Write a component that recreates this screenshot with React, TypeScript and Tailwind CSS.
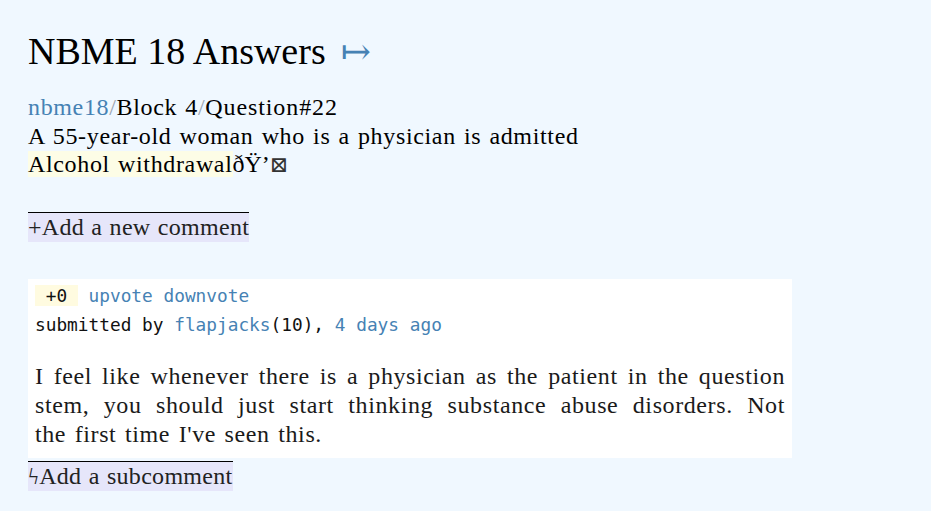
import React from "react";

const serif = { fontFamily: '"Liberation Serif", "DejaVu Serif", serif' };
const mono = { fontFamily: '"DejaVu Sans Mono", "Liberation Mono", monospace' };

export default function App() {
  return (
    <div
      className="min-h-screen bg-[#f0f8ff] pl-[28px] pt-[29px] pb-[20px] text-black"
      style={serif}
    >
      <h1 className="text-[38px] leading-[44px] font-normal">
        NBME 18 Answers<span className="ml-[15px] text-[#4682b4] text-[36px]">↦</span>
      </h1>

      <div className="mt-[19px] text-[24px] leading-[28.5px] tracking-[0.65px] [word-spacing:1.5px]">
        <div>
          <span className="text-[#4682b4]">nbme18</span>
          <span className="text-[#9aa5b1]">/</span>
          <span>Block 4</span>
          <span className="text-[#9aa5b1]">/</span>
          <span className="tracking-[0.9px]">Question#22</span>
        </div>
        <div>A 55-year-old woman who is a physician is admitted</div>
        <div>
          <span className="bg-[#fdfde6]">Alcohol withdrawal</span>
          <span className="tracking-normal">ðŸ’</span>
          <span className="text-[22px] text-[#333]">⊠</span>
        </div>
      </div>

      <div className="mt-[32px]">
        <span className="inline-block border-t border-black bg-[#e6e6fa] text-[24px] leading-[29px] text-[#222] tracking-[0.3px] [word-spacing:1px]">
          +Add a new comment
        </span>
      </div>

      <div className="mt-[37px] w-[764px] bg-white px-[7px] pt-[2.5px] pb-[9px]">
        <div className="text-[17.8px] leading-[29px] whitespace-pre" style={mono}>
          <span className="bg-[#fffbe0] text-[#111]"> +0 </span>
          <span className="text-[#4682b4]"> upvote downvote</span>
        </div>
        <div className="text-[17.8px] leading-[29px] whitespace-pre text-[#111]" style={mono}>
          submitted by <span className="text-[#4682b4]">flapjacks</span>(10),{" "}
          <span className="text-[#4682b4]">4 days ago</span>
        </div>
        <div className="mt-[23px] text-[24px] leading-[29px] tracking-[0.6px] text-[#1a1a1a]">
          <div className="text-justify [text-align-last:justify]">
            I feel like whenever there is a physician as the patient in the question
          </div>
          <div className="text-justify [text-align-last:justify]">
            stem, you should just start thinking substance abuse disorders. Not
          </div>
          <div className="[word-spacing:2px]">the first time I've seen this.</div>
        </div>
      </div>

      <div className="mt-[3px]">
        <span className="inline-block border-t border-black bg-[#e6e6fa] text-[24px] leading-[29px] text-[#222] tracking-[0.3px] [word-spacing:1px]">
          ϟAdd a subcomment
        </span>
      </div>
    </div>
  );
}
